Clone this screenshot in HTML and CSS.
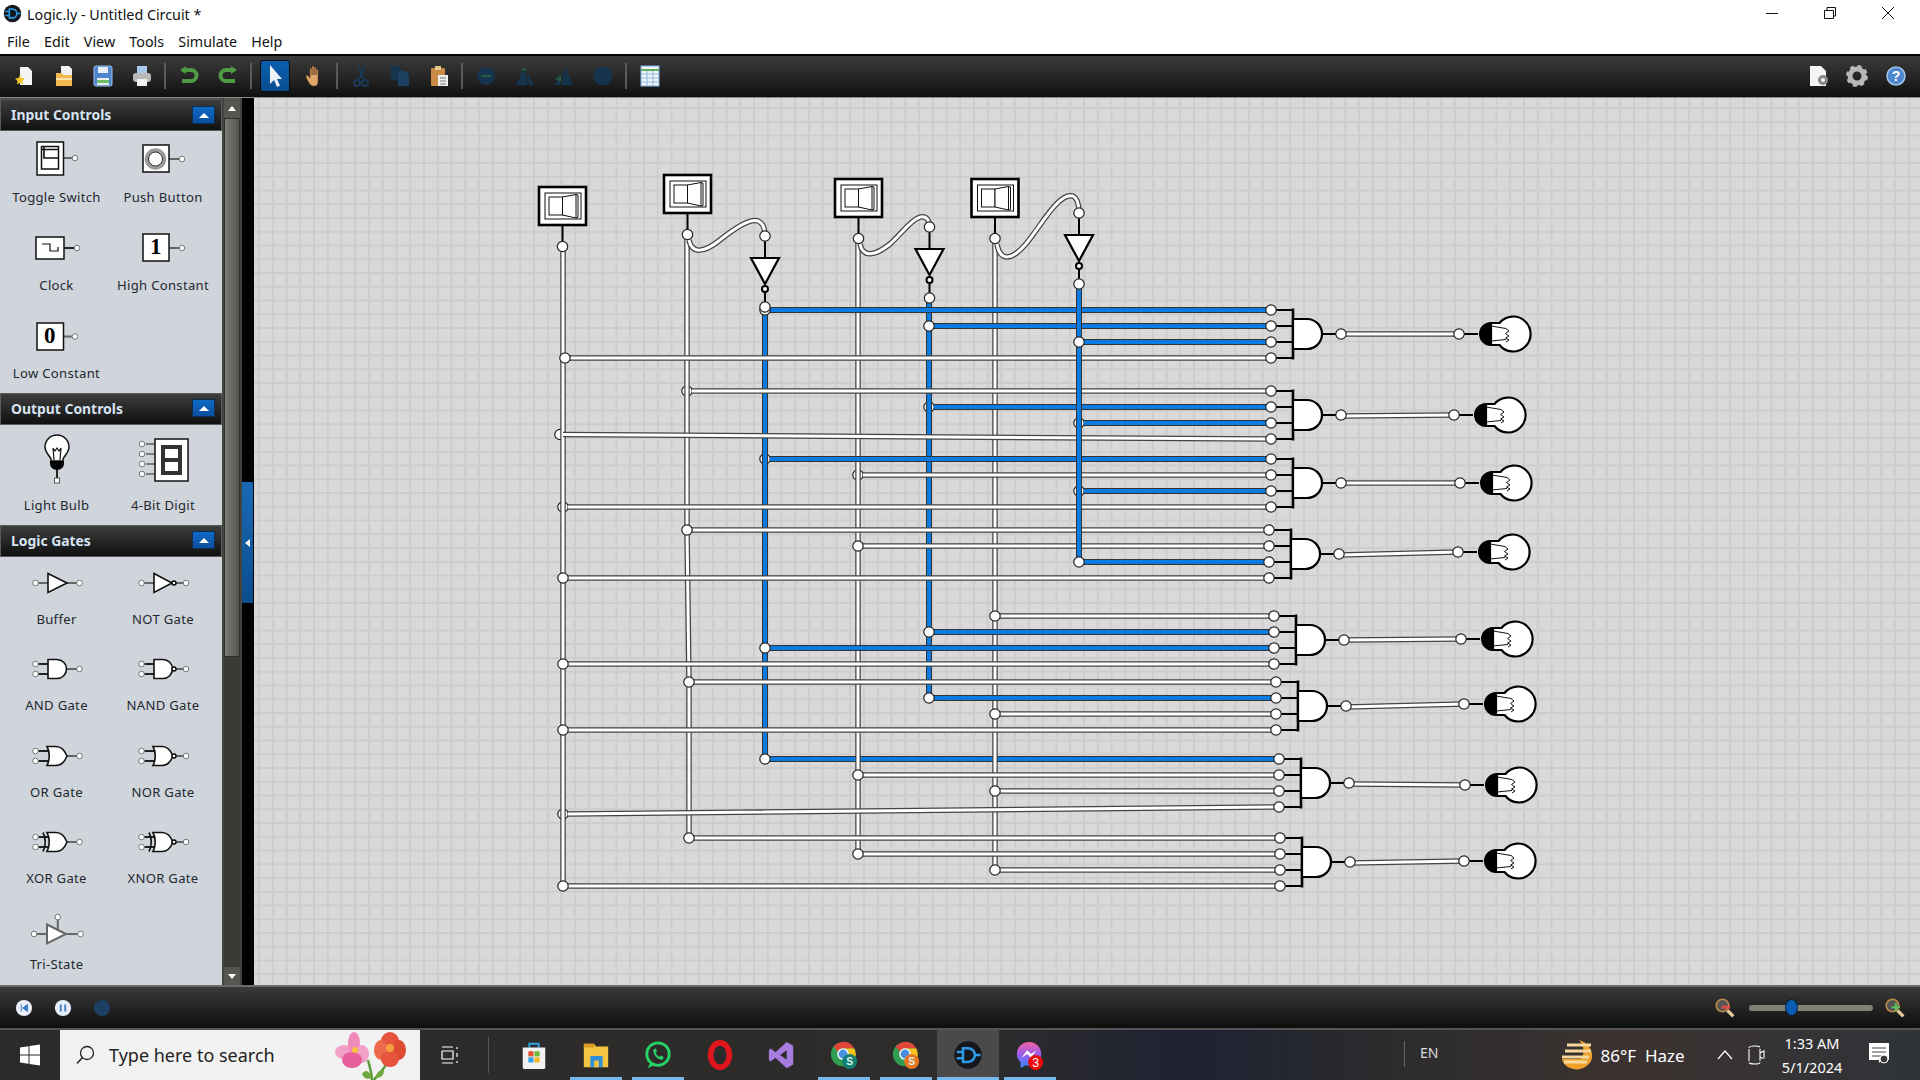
FILE: index.html
```html
<!DOCTYPE html>
<html lang="en">
<head>
    <meta charset="UTF-8">
    <title>Logic.ly - Untitled Circuit *</title>
    <link rel="stylesheet" href="styles.css">
</head>
<body>

<svg class="sprites" width="0" height="0">
    <defs>
        <!-- small palette pins -->
        <circle id="dot" r="2.8" class="dot"/>
        <g id="logicly">
            <circle cx="12" cy="12" r="11" fill="#14181d"/>
            <path d="M8 6.5h4a5.5 5.5 0 0 1 0 11H8z" fill="none" stroke="#2f9be8" stroke-width="2"/>
            <path d="M3 9.5h5M3 14.5h5M17.5 12H22" stroke="#2f9be8" stroke-width="2"/>
        </g>
        <path id="and-body" d="M-9 -9.5H0A9.5 9.5 0 0 1 0 9.5H-9z" class="gate-shape"/>
        <path id="or-body" d="M-10 -9.5H-1C4 -9.5 8 -5 10 0C8 5 4 9.5 -1 9.5H-10C-7 4 -7 -4 -10 -9.5z" class="gate-shape"/>

        <!-- circuit parts -->
        <circle id="pin" r="5.2" class="pin"/>
        <g id="switch">
            <path d="M24.5 40V60" class="stub"/>
            <rect x="1" y="1" width="47" height="38" class="switch-box"/>
            <rect x="7" y="7" width="36" height="26" class="thin"/>
            <rect x="11" y="11" width="13.5" height="18" class="thin"/>
            <path d="M24.5 11L38 8.5V32L24.5 29zM38 8.5L40 9V31.5L38 32" class="thin"/>
            <use href="#pin" x="24.5" y="60.5"/>
        </g>
        <g id="not-down">
            <path d="M0 0V22M0 56V71" class="stub"/>
            <path d="M-14 22H14L0 48z" class="gate-body"/>
            <circle cy="53" r="3" fill="#fff" stroke="#000" stroke-width="2"/>
            <use href="#pin"/>
            <use href="#pin" y="71"/>
        </g>
        <g id="and4">
            <path d="M-22 -24H0M-22 -8H0M-22 8H0M-22 24H0M29 0H48" class="stub"/>
            <path d="M0 -25.5V25.5" class="bar"/>
            <path d="M0 -15H14A15 15 0 0 1 14 15H0z" class="gate-body"/>
            <use href="#pin" x="-22" y="-24"/>
            <use href="#pin" x="-22" y="-8"/>
            <use href="#pin" x="-22" y="8"/>
            <use href="#pin" x="-22" y="24"/>
            <use href="#pin" x="48"/>
        </g>
        <g id="bulb">
            <path d="M0 0H19" class="stub"/>
            <path d="M32 -11H40.500A17.500 17.500 0 1 1 40.500 11H32z" class="gate-body"/>
            <path d="M32 -11A11 11 0 0 0 32 11z" fill="#000" stroke="#000" stroke-width="2"/>
            <path d="M32 -8L47 -5.500M32 7L47 5.500M47 -5.500L50 -3L46.500 -.5L50 2L46.500 4L50 6L47 8" class="filament"/>
            <use href="#pin"/>
        </g>

        <!-- wires, drawn twice: dark edge then core -->
        <path id="wires-top-blue" d="M765 759H1278"/>
        <path id="wires-v-white" d="M563 247V886M687 234V530L689 682V838M858 238V854M995 238V870"/>
        <path id="wires-v-blue" d="M765 310V759M929 297V698"/>
        <path id="wires-h-white" d="M565 358H1271M692 391H1271M563 434.5L1271 439M863 475H1271M568 507H1271M687 530H1269M858 546H1269M563 578H1269M995 616H1273M563 664H1273M689 682H1275M995 714H1275M563 730H1275M858 775H1278M995 791H1278M568 814L1278 807M689 838H1279M858 854H1279M995 870H1279M563 886H1279"/>
        <path id="wires-h-blue" d="M765 310H1271M929 326H1271M1079 342H1271M934 407H1271M1084 423H1271M770 459H1271M1084 491H1271M1079 562H1269M929 632H1273M765 648H1273M929 698H1275"/>
        <path id="wires-last-blue" d="M1079 284V562"/>
        <path id="wires-out" d="M1341 334H1459M1341 416L1454 415M1341 483H1460M1339 555L1458 552M1344 640L1461 639M1346 707L1464 704M1349 784L1465 785M1350 863L1464 861M689 240C692 255 705 252 720 240C735 228 750 218 758 221C763 223 765 228 765 236M860 244C863 258 875 256 890 244C903 232 915 215 924 217C928 218 929.5 222 929.5 227M997 244C1000 262 1012 260 1025 245C1040 228 1058 192 1073 196C1077 198 1079 204 1079 213"/>
    </defs>
</svg>

<div class="app">
    <header class="titlebar">
        <svg class="app-icon" viewBox="0 0 24 24"><use href="#logicly"/></svg>
        <span class="title-text">Logic.ly - Untitled Circuit *</span>
        <div class="win-controls">
            <svg width="16" height="16" viewBox="0 0 16 16"><path d="M2 8.5H14" stroke="#111" fill="none"/></svg>
            <svg width="16" height="16" viewBox="0 0 16 16"><path d="M2.5 5.5H11.5V13.5H2.5zM5 5V2.5H13.5V11H12" stroke="#111" fill="none"/></svg>
            <svg width="16" height="16" viewBox="0 0 16 16"><path d="M2 2L14 14M14 2L2 14" stroke="#111" fill="none"/></svg>
        </div>
    </header>

    <nav class="menubar">
        <span>File</span><span>Edit</span><span>View</span><span>Tools</span><span>Simulate</span><span>Help</span>
    </nav>

    <div class="toolbar">
        <button class="tool"><svg viewBox="0 0 24 24"><path d="M7 3H15L19 7V21H7z" fill="#f5f5f5"/><path d="M7 11L8.500 14L12 14.500L9.500 17L10 20.500L7 18.800L4 20.500L4.500 17L2 14.500L5.500 14z" fill="#f2c428"/></svg></button>
        <button class="tool"><svg viewBox="0 0 24 24"><path d="M9 2H17L20 5V13H9z" fill="#f2f2f2"/><path d="M4 9H10L11 11H20V22H4z" fill="#f0b84e"/><path d="M4 14H20V16H4z" fill="#fbe3a5"/></svg></button>
        <button class="tool"><svg viewBox="0 0 24 24"><rect x="3" y="2" width="18" height="20" rx="2" fill="#4d86cf" stroke="#9cc0ea"/><rect x="7" y="3" width="10" height="6" fill="#e7eef7"/><rect x="6" y="14" width="12" height="7" fill="#e8efe8"/><rect x="6" y="16" width="12" height="3" fill="#6fbf6a"/></svg></button>
        <button class="tool"><svg viewBox="0 0 24 24"><rect x="7" y="2" width="10" height="8" fill="#a9c9ea"/><rect x="3" y="9" width="18" height="9" rx="3" fill="#b9b9b9"/><rect x="7" y="15" width="10" height="7" fill="#f2f2f2"/></svg></button>
        <i class="sep"></i>
        <button class="tool"><svg viewBox="0 0 24 24"><path d="M5 6H14A5.500 5.500 0 0 1 14 17H5" fill="none" stroke="#4f9a45" stroke-width="4"/><path d="M9 2L3 6L9 10z" fill="#4f9a45"/></svg></button>
        <button class="tool"><svg viewBox="0 0 24 24"><path d="M19 6H10A5.500 5.500 0 0 0 10 17H19" fill="none" stroke="#4f9a45" stroke-width="4"/><path d="M15 2L21 6L15 10z" fill="#4f9a45"/></svg></button>
        <i class="sep"></i>
        <button class="tool is-active"><svg viewBox="0 0 24 24"><path d="M7 1V20L11 16L14 23L17 21.500L14 15H19z" fill="#eef3f8"/></svg></button>
        <button class="tool"><svg viewBox="0 0 24 24"><path d="M10 22C7 20 4 14 4 12C5 10 7 13 8 14V5C8 4 10 4 10 5V11V3C10 2 12 2 12 3V11V4C12 3 14 3 14 4V11V6C14 5 16 5 16 6V17C16 20 15 22 13 22z" fill="#e0a56a" stroke="#5d3a1c" stroke-width=".6"/></svg></button>
        <i class="sep"></i>
        <button class="tool"><svg viewBox="0 0 24 24"><path d="M16 2L10 15M9 2L14 15" stroke="#1a3a57" stroke-width="2" fill="none"/><circle cx="8" cy="19" r="3" fill="none" stroke="#1a3a57" stroke-width="2"/><circle cx="16" cy="19" r="3" fill="none" stroke="#1a3a57" stroke-width="2"/></svg></button>
        <button class="tool"><svg viewBox="0 0 24 24"><path d="M3 2H11L13 5V16H3z" fill="#17344f"/><path d="M10 7H17L21 11V22H10z" fill="#1c4061"/></svg></button>
        <button class="tool"><svg viewBox="0 0 24 24"><rect x="4" y="4" width="14" height="18" rx="1" fill="#c98a45"/><rect x="8" y="2" width="6" height="4" fill="#e8c48e"/><rect x="11" y="11" width="10" height="11" fill="#efefef"/><path d="M13 14H19M13 17H19M13 20H19" stroke="#777"/></svg></button>
        <i class="sep"></i>
        <button class="tool"><svg viewBox="0 0 24 24"><circle cx="12" cy="12" r="9" fill="#17344f"/><path d="M7 12H17" stroke="#245a3e" stroke-width="2"/></svg></button>
        <button class="tool"><svg viewBox="0 0 24 24"><path d="M3 21L11 3L15 21zM14 7L21 21H16z" fill="#17344f"/><path d="M8 6L11 3L14 7z" fill="#245a3e"/></svg></button>
        <button class="tool"><svg viewBox="0 0 24 24"><path d="M21 21L13 3L9 21zM10 7L3 21H8z" fill="#17344f"/><path d="M3 15L9 11V18z" fill="#245a3e"/></svg></button>
        <button class="tool"><svg viewBox="0 0 24 24"><path d="M8 3H16L21 8V16L16 21H8L3 16V8z" fill="#17344f"/></svg></button>
        <i class="sep"></i>
        <button class="tool"><svg viewBox="0 0 24 24"><rect x="3" y="2" width="18" height="20" fill="#eef5fb" stroke="#7fb0e0"/><path d="M3 6H21" stroke="#5fb05a" stroke-width="2"/><path d="M3 10H21M3 14H21M3 18H21M9 7V22M15 7V22" stroke="#8fb7dd"/></svg></button>
        <div class="toolbar-right">
            <button class="tool"><svg viewBox="0 0 24 24"><path d="M4 2H15L20 7V22H4z" fill="#f4f4f4"/><circle cx="17" cy="16" r="5" fill="#888"/><circle cx="17" cy="16" r="2" fill="#eee"/></svg></button>
            <button class="tool"><svg viewBox="0 0 24 24"><circle cx="12" cy="12" r="7" fill="none" stroke="#b8b8b8" stroke-width="5"/><circle cx="12" cy="12" r="9.500" fill="none" stroke="#b8b8b8" stroke-width="3" stroke-dasharray="4 3.500"/></svg></button>
            <button class="tool"><svg viewBox="0 0 24 24"><circle cx="12" cy="12" r="9" fill="#4d86cf" stroke="#a5c6ea" stroke-width="1.500"/><text x="12" y="16.500" class="help-mark">?</text></svg></button>
        </div>
    </div>

    <main class="workspace">
        <aside class="sidebar">
            <section class="panel panel-input">
                <h3 class="panel-head">Input Controls <span class="collapse"></span></h3>
                <div class="palette">
                    <div class="item">
                        <svg viewBox="-35 -22 70 44"><path d="M6 0H18" class="pstub"/><rect x="-20" y="-16" width="26.500" height="33" class="pbox"/><rect x="-15.500" y="-11.500" width="17" height="22.500" class="pbox"/><path d="M-13 -11V0H1.500M-15 -8.500H1.500" class="pline wide"/><use href="#dot" x="18"/></svg>
                        <span>Toggle Switch</span>
                    </div>
                    <div class="item">
                        <svg viewBox="-35 -22 70 44"><path d="M6 1H19" class="pstub"/><rect x="-20" y="-13" width="26" height="27" class="pbox"/><circle cx="-7.500" cy="1" r="9" fill="#fff" stroke="#999" stroke-width="3.500"/><circle cx="-7.500" cy="1" r="7" fill="#fff" stroke="#222"/><use href="#dot" x="19" y="1"/></svg>
                        <span>Push Button</span>
                    </div>
                    <div class="item">
                        <svg viewBox="-35 -22 70 44"><path d="M6 2H19" class="pstub dark"/><rect x="-21" y="-9" width="28" height="22" class="pbox"/><path d="M-15 -2H-7V5H1V1" class="pline"/><use href="#dot" x="20" y="2"/></svg>
                        <span>Clock</span>
                    </div>
                    <div class="item">
                        <svg viewBox="-35 -22 70 44"><path d="M6 2H19" class="pstub"/><rect x="-20" y="-12" width="26" height="27" class="pbox"/><text x="-7" y="8" class="digit">1</text><use href="#dot" x="19" y="2"/></svg>
                        <span>High Constant</span>
                    </div>
                    <div class="item">
                        <svg viewBox="-35 -22 70 44"><path d="M6 2.500H18" class="pstub"/><rect x="-20" y="-11" width="26.500" height="27" class="pbox"/><text x="-7" y="9" class="digit">0</text><use href="#dot" x="18" y="2.500"/></svg>
                        <span>Low Constant</span>
                    </div>
                </div>
            </section>

            <section class="panel panel-output">
                <h3 class="panel-head">Output Controls <span class="collapse"></span></h3>
                <div class="palette">
                    <div class="item">
                        <svg viewBox="-35 -28 70 56"><path d="M0 10V20" class="pstub dark"/><path d="M-6 1C-8 -3 -12 -6 -12 -11A12 12 0 1 1 12 -11C12 -6 8 -3 6 1V3H-6z" class="pbox"/><path d="M-7 3H7V6A7 6 0 0 1 -7 6z" fill="#000"/><path d="M-4 -10L-3 2M4 -10L3 2M-4 -10L-2 -7L0 -10L2 -7L4 -10" class="pline"/><rect x="-2.500" y="20" width="5" height="5" fill="#fff" stroke="#555"/></svg>
                        <span>Light Bulb</span>
                    </div>
                    <div class="item">
                        <svg viewBox="-35 -28 70 56"><path d="M-17 -14H-8M-17 -4H-8M-17 6H-8M-17 16H-8" class="pstub dark thin-line"/><rect x="-8" y="-19" width="33" height="42" class="pbox"/><path d="M0 -11H17V15H0zM0 2H17" fill="none" stroke="#333" stroke-width="4"/><use href="#dot" x="-21" y="-14"/><use href="#dot" x="-21" y="-4"/><use href="#dot" x="-21" y="6"/><use href="#dot" x="-21" y="16"/></svg>
                        <span>4-Bit Digit</span>
                    </div>
                </div>
            </section>

            <section class="panel panel-gates">
                <h3 class="panel-head">Logic Gates <span class="collapse"></span></h3>
                <div class="palette">
                    <div class="item">
                        <svg viewBox="-35 -22 70 44"><path d="M-21 0H22" class="pstub"/><path d="M-9 -9.500L10 0L-9 9.500z" class="gate-shape"/><use href="#dot" x="-21.500"/><use href="#dot" x="22.500"/></svg>
                        <span>Buffer</span>
                    </div>
                    <div class="item">
                        <svg viewBox="-35 -22 70 44"><path d="M-21 0H23" class="pstub"/><path d="M-9 -9.500L9 0L-9 9.500z" class="gate-shape"/><circle cx="11" r="2" class="bubble"/><use href="#dot" x="-21.500"/><use href="#dot" x="23"/></svg>
                        <span>NOT Gate</span>
                    </div>
                    <div class="item">
                        <svg viewBox="-35 -22 70 44"><path d="M-21 -5H-9M-21 5H-9" class="pstub dark"/><path d="M10 0H22" class="pstub"/><use href="#and-body"/><use href="#dot" x="-21.500" y="-5"/><use href="#dot" x="-21.500" y="5"/><use href="#dot" x="22.500"/></svg>
                        <span>AND Gate</span>
                    </div>
                    <div class="item">
                        <svg viewBox="-35 -22 70 44"><path d="M-21 -5H-9M-21 5H-9" class="pstub dark"/><path d="M10 0H23" class="pstub"/><use href="#and-body"/><circle cx="11" r="2" class="bubble"/><use href="#dot" x="-21.500" y="-5"/><use href="#dot" x="-21.500" y="5"/><use href="#dot" x="23"/></svg>
                        <span>NAND Gate</span>
                    </div>
                    <div class="item">
                        <svg viewBox="-35 -22 70 44"><path d="M-21 -5H-8M-21 5H-8" class="pstub dark"/><path d="M10 0H22" class="pstub"/><use href="#or-body"/><use href="#dot" x="-21.500" y="-5"/><use href="#dot" x="-21.500" y="5"/><use href="#dot" x="22.500"/></svg>
                        <span>OR Gate</span>
                    </div>
                    <div class="item">
                        <svg viewBox="-35 -22 70 44"><path d="M-21 -5H-8M-21 5H-8" class="pstub dark"/><path d="M10 0H23" class="pstub"/><use href="#or-body"/><circle cx="11" r="2" class="bubble"/><use href="#dot" x="-21.500" y="-5"/><use href="#dot" x="-21.500" y="5"/><use href="#dot" x="23"/></svg>
                        <span>NOR Gate</span>
                    </div>
                    <div class="item">
                        <svg viewBox="-35 -22 70 44"><path d="M-21 -5H-8M-21 5H-8" class="pstub dark"/><path d="M-14 -9.500C-11 -4 -11 4 -14 9.500" class="pline wide"/><path d="M10 0H22" class="pstub"/><use href="#or-body"/><use href="#dot" x="-21.500" y="-5"/><use href="#dot" x="-21.500" y="5"/><use href="#dot" x="22.500"/></svg>
                        <span>XOR Gate</span>
                    </div>
                    <div class="item">
                        <svg viewBox="-35 -22 70 44"><path d="M-21 -5H-8M-21 5H-8" class="pstub dark"/><path d="M-14 -9.500C-11 -4 -11 4 -14 9.500" class="pline wide"/><path d="M10 0H23" class="pstub"/><use href="#or-body"/><circle cx="11" r="2" class="bubble"/><use href="#dot" x="-21.500" y="-5"/><use href="#dot" x="-21.500" y="5"/><use href="#dot" x="23"/></svg>
                        <span>XNOR Gate</span>
                    </div>
                    <div class="item">
                        <svg viewBox="-35 -22 70 44"><path d="M-23 6H23M0.800 -11V2" class="pstub"/><path d="M-10 -3.500L9 6L-10 15.500z" class="gate-shape gray"/><use href="#dot" x="-23" y="6"/><use href="#dot" x="23.500" y="6"/><use href="#dot" x="0.800" y="-11"/></svg>
                        <span>Tri-State</span>
                    </div>
                </div>
            </section>
        </aside>

        <div class="vscroll">
            <div class="vscroll-btn"><i class="tri-up"></i></div>
            <div class="vscroll-thumb"></div>
            <div class="vscroll-track"></div>
            <div class="vscroll-btn low"><i class="tri-down"></i></div>
        </div>

        <div class="splitter"><div class="splitter-grip"><i></i></div></div>

        <div class="canvas">
            <svg class="circuit" viewBox="254 98 1666 887" width="1666" height="887">
                <!-- joints that sit under the trunk wires -->
                <use href="#pin" x="687" y="391"/>
                <use href="#pin" x="929" y="407"/>
                <use href="#pin" x="1079" y="423"/>
                <use href="#pin" x="765" y="459"/>
                <use href="#pin" x="858" y="475"/>
                <use href="#pin" x="1079" y="491"/>
                <use href="#pin" x="560" y="434.500"/>
                <use href="#pin" x="563" y="507"/>
                <use href="#pin" x="563" y="814"/>

                <use href="#wires-top-blue" class="edge-blue"/>
                <use href="#wires-top-blue" class="core-blue"/>
                <use href="#wires-v-white" class="edge-white"/>
                <use href="#wires-v-white" class="core-white"/>
                <use href="#wires-v-blue" class="edge-blue"/>
                <use href="#wires-v-blue" class="core-blue"/>
                <use href="#wires-h-white" class="edge-white"/>
                <use href="#wires-h-white" class="core-white"/>
                <use href="#wires-h-blue" class="edge-blue"/>
                <use href="#wires-h-blue" class="core-blue"/>
                <use href="#wires-last-blue" class="edge-blue"/>
                <use href="#wires-last-blue" class="core-blue"/>
                <use href="#wires-out" class="edge-white"/>
                <use href="#wires-out" class="core-white"/>

                <use href="#pin" x="565" y="358"/>
                <use href="#pin" x="765" y="310"/>
                <use href="#pin" x="929" y="326"/>
                <use href="#pin" x="1079" y="342"/>
                <use href="#pin" x="687" y="530"/>
                <use href="#pin" x="858" y="546"/>
                <use href="#pin" x="1079" y="562"/>
                <use href="#pin" x="563" y="578"/>
                <use href="#pin" x="995" y="616"/>
                <use href="#pin" x="929" y="632"/>
                <use href="#pin" x="765" y="648"/>
                <use href="#pin" x="563" y="664"/>
                <use href="#pin" x="689" y="682"/>
                <use href="#pin" x="929" y="698"/>
                <use href="#pin" x="995" y="714"/>
                <use href="#pin" x="563" y="730"/>
                <use href="#pin" x="765" y="759"/>
                <use href="#pin" x="858" y="775"/>
                <use href="#pin" x="995" y="791"/>
                <use href="#pin" x="689" y="838"/>
                <use href="#pin" x="858" y="854"/>
                <use href="#pin" x="995" y="870"/>
                <use href="#pin" x="563" y="886"/>

                <use href="#switch" x="538" y="186"/>
                <use href="#switch" x="663" y="174"/>
                <use href="#switch" x="834" y="178"/>
                <use href="#switch" x="970.500" y="178"/>

                <use href="#not-down" x="765" y="236"/>
                <use href="#not-down" x="929.500" y="227"/>
                <use href="#not-down" x="1079" y="213"/>

                <use href="#and4" x="1293" y="334"/>
                <use href="#and4" x="1293" y="415"/>
                <use href="#and4" x="1293" y="483"/>
                <use href="#and4" x="1291" y="554"/>
                <use href="#and4" x="1296" y="640"/>
                <use href="#and4" x="1298" y="706"/>
                <use href="#and4" x="1301" y="783"/>
                <use href="#and4" x="1302" y="862"/>

                <use href="#bulb" x="1459" y="334"/>
                <use href="#bulb" x="1454" y="415"/>
                <use href="#bulb" x="1460" y="483"/>
                <use href="#bulb" x="1458" y="552"/>
                <use href="#bulb" x="1461" y="639"/>
                <use href="#bulb" x="1464" y="704"/>
                <use href="#bulb" x="1465" y="785"/>
                <use href="#bulb" x="1464" y="861"/>
            </svg>
        </div>
    </main>

    <div class="statusbar">
        <button class="round-btn"><svg viewBox="0 0 20 20"><circle cx="10" cy="10" r="9" fill="#e8eff8"/><path d="M7 6V14M14 6L8.500 10L14 14z" fill="#3a78c2" stroke="#3a78c2"/></svg></button>
        <button class="round-btn"><svg viewBox="0 0 20 20"><circle cx="10" cy="10" r="9" fill="#e8eff8"/><path d="M7.500 6V14M12.500 6V14" stroke="#3a78c2" stroke-width="2"/></svg></button>
        <button class="round-btn"><svg viewBox="0 0 20 20"><circle cx="10" cy="10" r="9" fill="#1d3f60"/></svg></button>
        <div class="zoom-box">
            <svg class="lens" viewBox="0 0 24 24"><circle cx="9" cy="9" r="7.500" fill="#555" stroke="#b98a4a" stroke-width="2"/><path d="M15 15L22 22" stroke="#e6c79c" stroke-width="4"/><rect x="8" y="9" width="10" height="4" fill="#e04b4b"/></svg>
            <div class="zoom-track"><span class="zoom-thumb"></span></div>
            <svg class="lens" viewBox="0 0 24 24"><circle cx="9" cy="9" r="7.500" fill="#555" stroke="#b98a4a" stroke-width="2"/><path d="M15 15L22 22" stroke="#e6c79c" stroke-width="4"/><path d="M13 6V16M8 11H18" stroke="#5fc25a" stroke-width="2.500"/></svg>
        </div>
    </div>

    <footer class="taskbar">
        <div class="start"><svg width="22" height="22" viewBox="0 0 22 22"><path d="M1 3.500L9.500 2.300V10.500H1zM10.500 2.100L21 .6V10.500H10.500zM1 11.500H9.500V19.700L1 18.500zM10.500 11.500H21V21.400L10.500 19.900z" fill="#fff"/></svg></div>
        <div class="search">
            <svg class="search-lens" width="20" height="20" viewBox="0 0 20 20"><circle cx="12" cy="8" r="6.500" fill="none" stroke="#222" stroke-width="1.300"/><path d="M7.500 12.500L2 18.500" stroke="#222" stroke-width="1.500"/></svg>
            <span>Type here to search</span>
            <svg class="flowers" width="76" height="50" viewBox="0 0 76 50">
                <path d="M36 30C38 38 40 44 40 50M56 30C54 38 46 44 42 50" stroke="#5a9a3a" stroke-width="2.500" fill="none"/>
                <path d="M30 44C34 38 38 42 40 48C34 50 32 48 30 44zM52 40C46 40 44 44 44 48C48 48 52 46 52 40z" fill="#6fa83f"/>
                <ellipse cx="12" cy="22" rx="9" ry="7" fill="#f3a0c8"/><ellipse cx="22" cy="13" rx="6" ry="11" fill="#f08ab8"/><ellipse cx="30" cy="24" rx="7" ry="9" fill="#f3a0c8"/><ellipse cx="20" cy="30" rx="10" ry="8" fill="#e85f9d"/><circle cx="23" cy="20" r="3" fill="#f4c33c"/>
                <ellipse cx="58" cy="11" rx="9" ry="9" fill="#e8533d"/><ellipse cx="49" cy="20" rx="7" ry="10" fill="#ee6a4a"/><ellipse cx="67" cy="20" rx="7" ry="10" fill="#df4a35"/><ellipse cx="58" cy="29" rx="9" ry="8" fill="#e8533d"/><circle cx="58" cy="18" r="4" fill="#f4a03c"/>
            </svg>
        </div>
        <div class="task-view"><svg width="22" height="22" viewBox="0 0 22 22"><path d="M3 3H14M3 19H14M3 7V15H14V7H3M18 3V5M18 9V13M18 17V19" stroke="#fff" fill="none" stroke-width="1.200"/></svg></div>
        <i class="task-sep"></i>

        <div class="app-btn"><svg viewBox="0 0 32 32"><path d="M11 8V4H21V8" fill="none" stroke="#2ea4e8" stroke-width="2"/><path d="M4 8H28V29A2 2 0 0 1 26 31H6A2 2 0 0 1 4 29z" fill="#f2f2f2"/><rect x="10" y="12" width="5.500" height="5.500" fill="#e8502f"/><rect x="16.500" y="12" width="5.500" height="5.500" fill="#6db93a"/><rect x="10" y="18.500" width="5.500" height="5.500" fill="#2ea4e8"/><rect x="16.500" y="18.500" width="5.500" height="5.500" fill="#f5b71e"/></svg></div>
        <div class="app-btn is-running"><svg viewBox="0 0 32 32"><path d="M3 4H14L16 7H29V29H3z" fill="#f5c542"/><path d="M3 4H14V8H3z" fill="#d99a1f"/><rect x="10" y="17" width="13" height="12" fill="#2f8fd8"/><rect x="14" y="22" width="5" height="7" fill="#f5c542"/></svg></div>
        <div class="app-btn is-running"><svg viewBox="0 0 32 32"><circle cx="16" cy="15" r="12" fill="none" stroke="#25d366" stroke-width="3"/><path d="M8 24L5 30L12 27" fill="#25d366"/><path d="M11 10C11 16 15 21 21 21L22 18L19 16.500L17.500 18C15.500 17 14 15 13.500 13.500L15 12L13.500 9z" fill="#25d366"/></svg></div>
        <div class="app-btn"><svg viewBox="0 0 32 32"><ellipse cx="16" cy="16" rx="10" ry="13" fill="none" stroke="#e0161e" stroke-width="6"/></svg></div>
        <div class="app-btn"><svg viewBox="0 0 32 32"><path d="M21 2L28 6V26L21 30L9 19L4 23L2 21V11L4 9L9 13zM21 11L14 16L21 21z" fill="#a67ce0" fill-rule="evenodd"/></svg></div>
        <div class="app-btn is-running"><svg viewBox="0 0 32 32"><circle cx="15" cy="15" r="13" fill="#2f9e52"/><path d="M15 2A13 13 0 0 1 27 9H15A6 6 0 0 0 9.500 12.500L5 7A13 13 0 0 1 15 2z" fill="#e2463a"/><path d="M27 9A13 13 0 0 1 18 28L21 15A6 6 0 0 0 15 9z" fill="#f6c21c"/><circle cx="15" cy="15" r="5.500" fill="#4a90e2" stroke="#fff" stroke-width="1.500"/><circle cx="22" cy="23" r="8" fill="#137f72"/><text x="22" y="27" class="badge-s">S</text></svg></div>
        <div class="app-btn is-running"><svg viewBox="0 0 32 32"><circle cx="15" cy="15" r="13" fill="#2f9e52"/><path d="M15 2A13 13 0 0 1 27 9H15A6 6 0 0 0 9.500 12.500L5 7A13 13 0 0 1 15 2z" fill="#e2463a"/><path d="M27 9A13 13 0 0 1 18 28L21 15A6 6 0 0 0 15 9z" fill="#f6c21c"/><circle cx="15" cy="15" r="5.500" fill="#4a90e2" stroke="#fff" stroke-width="1.500"/><circle cx="22" cy="23" r="8" fill="#e8761e"/><text x="22" y="27" class="badge-s">S</text></svg></div>
        <div class="app-btn is-running is-current"><svg viewBox="0 0 24 24"><use href="#logicly"/></svg></div>
        <div class="app-btn is-running"><svg viewBox="0 0 32 32"><defs><linearGradient id="msgr" x1="0" y1="0" x2="0" y2="1"><stop offset="0" stop-color="#f35ea0"/><stop offset=".5" stop-color="#9a5cf0"/><stop offset="1" stop-color="#2f8cf5"/></linearGradient></defs><path d="M15 2C7 2 2 8 2 15C2 19 4 22 6 24V30L11 27C20 30 28 24 28 15C28 8 23 2 15 2z" fill="url(#msgr)"/><path d="M7 19L13 11L17 15L23 11L17 19L13 15z" fill="#fff"/><circle cx="22" cy="24" r="8" fill="#f00a0a"/><text x="22" y="28.500" class="badge-n">3</text></svg></div>

        <div class="tray">
            <span class="lang">EN</span>
            <svg class="weather" width="32" height="32" viewBox="0 0 32 32"><path d="M18 1C28 4 32 12 31 19C29 28 18 33 9 29C4 27 2 24 1 20H20C24 14 23 6 18 1z" fill="#f0a02c"/><path d="M6 6H30M4 12H30M1 18H28M3 23H26" stroke="#f6d79c" stroke-width="3" fill="none"/></svg>
            <span class="weather-text">86°F&nbsp; Haze</span>
            <svg class="caret" width="18" height="18" viewBox="0 0 18 18"><path d="M2 13L9 5L16 13" stroke="#fff" fill="none" stroke-width="1.200"/></svg>
            <svg class="meet" width="20" height="22" viewBox="0 0 20 22"><path d="M3 4C3 2 6 2 9 2C12 2 14 2 14 4V18C14 20 12 20 9 20C6 20 3 20 3 18zM14 9L18 7V15L14 13" stroke="#fff" fill="none" stroke-width="1.100" stroke-dasharray="12 1.500"/></svg>
            <div class="clock"><span>1:33 AM</span><span>5/1/2024</span></div>
            <div class="notify"><svg width="22" height="22" viewBox="0 0 22 22"><path d="M1 1H21V18H14L11 21V18H1z" fill="#fff"/><path d="M4 6H18M4 10H18M4 14H13" stroke="#444"/><circle cx="16" cy="17" r="4" fill="#3a3a3a" stroke="#fff"/></svg></div>
        </div>
    </footer>
</div>

</body>
</html>
```

FILE: styles.css
```css
* { box-sizing: border-box; }
html, body { margin: 0; padding: 0; }
body { width: 1920px; height: 1080px; overflow: hidden; font-family: "Noto Sans", "Open Sans", sans-serif; background: #fff; }
button { border: none; background: none; padding: 0; margin: 0; }
h3 { margin: 0; }
.sprites { position: absolute; }

.app { display: flex; flex-direction: column; height: 1080px; }

/* title and menu */
.titlebar { height: 27px; display: flex; align-items: center; padding: 2px 0 0 3px; background: #fff; }
.app-icon { width: 19px; height: 19px; margin-top: -2px; }
.title-text { margin-left: 5px; font-size: 14.3px; color: #111; }
.win-controls { margin-left: auto; margin-top: -3px; display: flex; gap: 42px; padding-right: 24px; }
.menubar { height: 27px; display: flex; align-items: center; padding: 2px 0 0 7px; gap: 14.2px; font-size: 14.3px; color: #111; background: #fff; }

/* toolbar */
.toolbar { height: 44px; display: flex; align-items: center; padding: 0 5px 2px; border-top: 2px solid #000; border-bottom: 1px solid #8a8a8a; background: linear-gradient(#3c3c3c, #101010); }
.tool { width: 39px; height: 32px; display: flex; align-items: center; justify-content: center; }
.tool svg { width: 24px; height: 24px; }
.tool.is-active { width: 30px; margin: 0 4.5px; border: 1px solid #0b0b0b; border-radius: 3px; background: linear-gradient(#0b5fae, #0a4c90); }
.sep { width: 2px; height: 26px; margin: 0 3px; background: #5a5a5a; }
.toolbar-right { margin-left: auto; display: flex; }
.help-mark { font-size: 14px; font-weight: 700; fill: #fff; text-anchor: middle; font-family: "Liberation Sans", sans-serif; }

/* workspace */
.workspace { height: 887px; display: flex; background: #45453f; }
.sidebar { width: 222px; background: #d0d5dc; overflow: hidden; }
.panel-head { height: 32px; display: flex; align-items: center; justify-content: space-between; padding: 0 6px 2px 10px; border: 1px solid #5a5a5a; font-size: 13.9px; font-weight: 700; color: #d5e3f2; background: linear-gradient(#3d3d3d, #101010); }
.panel-input { padding-top: 1px; background: #4a4a4a; }
.panel-input .collapse { margin-top: 2px; }
.collapse { width: 23px; height: 18px; display: flex; align-items: center; justify-content: center; border: 1px solid #0c2e55; background: linear-gradient(#0f6ac6, #0a4f9e); }
.collapse::after { content: ""; border-left: 5px solid transparent; border-right: 5px solid transparent; border-bottom: 5px solid #fff; }
.palette { display: grid; grid-template-columns: 107px 106px; padding-left: 3px; background: #d0d5dc; }
.item { display: flex; flex-direction: column; align-items: center; font-size: 13.1px; line-height: 20px; letter-spacing: .3px; color: #232830; white-space: nowrap; }
.item svg { width: 70px; height: 44px; }

.panel-input .item { height: 88px; padding-top: 5px; }
.panel-input .item span { margin-top: 7px; }
.panel-input .item:last-child { height: 86px; }
.panel-output .item { height: 100px; padding-top: 5px; }
.panel-output .item svg { height: 56px; }
.panel-output .item span { margin-top: 9px; }
.panel-gates .palette { padding-top: 3px; }
.panel-gates .item { height: 86.25px; padding-top: 1px; }
.panel-gates .item span { margin-top: 4px; }

/* palette drawing */
.dot { fill: #fff; stroke: #777; stroke-width: 1; }
.pstub { stroke: #666; stroke-width: 2; fill: none; }
.pstub.dark { stroke: #222; }
.pstub.thin-line { stroke-width: 1.2; }
.pbox { fill: #fff; stroke: #111; stroke-width: 1.5; }
.pline { fill: none; stroke: #111; stroke-width: 1.2; }
.pline.wide { stroke-width: 1.6; }
.digit { font-family: "Liberation Serif", serif; font-size: 23px; font-weight: 700; text-anchor: middle; fill: #000; }
.gate-shape { fill: #fff; stroke: #111; stroke-width: 1.6; }
.gate-shape.gray { stroke: #666; stroke-width: 2; }
.bubble { fill: #fff; stroke: #000; stroke-width: 1.4; }

/* scroll bar and splitter */
.vscroll { width: 16px; margin: 0 2px; display: flex; flex-direction: column; }
.vscroll-btn { height: 20px; display: flex; align-items: center; justify-content: center; background: #55554f; }
.vscroll-btn.low { height: 18px; }
.vscroll-thumb { height: 539px; border: 1px solid #2f2f2c; background: linear-gradient(90deg, #7c7c76, #55554f); }
.vscroll-track { flex: 1; background: #3b3b35; }
.tri-up { border-left: 4px solid transparent; border-right: 4px solid transparent; border-bottom: 5px solid #fff; }
.tri-down { border-left: 4px solid transparent; border-right: 4px solid transparent; border-top: 5px solid #fff; }
.splitter { width: 12px; padding-top: 384px; background: #000; }
.splitter-grip { width: 11px; height: 121px; display: flex; align-items: center; justify-content: center; background: linear-gradient(#1a69b5, #0b4d8e); }
.splitter-grip i { border-top: 4px solid transparent; border-bottom: 4px solid transparent; border-right: 5px solid #fff; }

/* circuit */
.canvas { flex: 1; position: relative; overflow: hidden; background-color: #d9d9d9;
    background-image: linear-gradient(90deg, #cdcdcd 1.5px, transparent 1.5px), linear-gradient(#cdcdcd 1.5px, transparent 1.5px);
    background-size: 13.75px 13.75px; background-position: 4px 9px; }
.circuit { display: block; }
.edge-white { fill: none; stroke: #444; stroke-width: 5.5; }
.core-white { fill: none; stroke: #fff; stroke-width: 3; }
.edge-blue { fill: none; stroke: #333; stroke-width: 6; }
.core-blue { fill: none; stroke: #0a7be0; stroke-width: 4; }
.pin { fill: #fff; stroke: #222; stroke-width: 1.2; }
.stub { fill: none; stroke: #000; stroke-width: 2; }
.bar { fill: none; stroke: #000; stroke-width: 2.6; }
.gate-body { fill: #fff; stroke: #000; stroke-width: 2.2; }
.switch-box { fill: #fff; stroke: #000; stroke-width: 2.6; }
.thin { fill: #fff; stroke: #111; stroke-width: 1; }
.filament { fill: none; stroke: #111; stroke-width: 1; }

/* status bar */
.statusbar { height: 45px; display: flex; align-items: center; padding: 0 10px 0 15px; gap: 21px; border-top: 2px solid #6a6a6a; border-bottom: 2px solid #555; background: linear-gradient(#3a3a3a, #0e0e0e); }
.round-btn { width: 18px; height: 18px; }
.round-btn svg { display: block; width: 18px; height: 18px; }
.zoom-box { margin-left: auto; display: flex; align-items: center; width: 195px; }
.lens { width: 20px; height: 20px; flex: none; }
.zoom-track { position: relative; width: 124px; height: 6px; margin: 0 12px 0 14px; border-radius: 3px; background: #7e8178; }
.zoom-thumb { position: absolute; left: 36px; top: -6px; width: 13px; height: 17px; border-radius: 50%; border: 1px solid #0a1f38; background: #0b5cb4; }

/* taskbar */
.taskbar { height: 50px; display: flex; align-items: center; background: linear-gradient(90deg, #2c2b29, #2e2c2b 50%, #1f2333 62%, #2b2b2d 72%, #3c3331 85%, #2f3338); color: #fff; }
.start { width: 60px; display: flex; justify-content: center; }
.search { width: 360px; height: 50px; display: flex; align-items: center; padding-left: 15px; position: relative; font-size: 18px; color: #222; background: #f2f2f2; }
.search span { margin-left: 14px; }
.flowers { position: absolute; right: 12px; top: 0; }
.task-view { width: 59px; display: flex; justify-content: center; }
.task-sep { width: 1px; height: 36px; margin: 0 14px 0 9px; background: #555; }
.app-btn { position: relative; width: 62px; height: 50px; display: flex; align-items: center; justify-content: center; }
.app-btn svg { width: 30px; height: 32px; }
.app-btn.is-running::after { content: ""; position: absolute; left: 5px; right: 5px; bottom: 0; height: 3px; background: #76b9ed; }
.app-btn.is-current { background: #4a4a4a; }
.app-btn.is-current::after { left: 0; right: 0; }
.badge-s { font-family: "Liberation Sans", sans-serif; font-size: 11px; font-weight: 700; fill: #d8efe8; text-anchor: middle; }
.badge-n { font-family: "Liberation Sans", sans-serif; font-size: 13px; fill: #fff; text-anchor: middle; }

.tray { margin-left: auto; height: 50px; display: flex; align-items: center; font-size: 14px; }
.lang { width: 157px; height: 26px; margin-top: -2px; padding-left: 15.5px; line-height: 24px; border-left: 1px solid #666; color: #ddd; font-size: 14px; }
.weather { width: 32px; margin-right: 8px; }
.weather-text { width: 85px; font-size: 17px; white-space: nowrap; }
.caret { margin: 0 1.5px 0 30px; }
.meet { margin: 0 0 0 11px; }
.clock { width: 92px; display: flex; flex-direction: column; align-items: center; gap: 5px; font-size: 14.500px; line-height: 19px; }
.notify { width: 62px; padding-left: 10px; }
```
